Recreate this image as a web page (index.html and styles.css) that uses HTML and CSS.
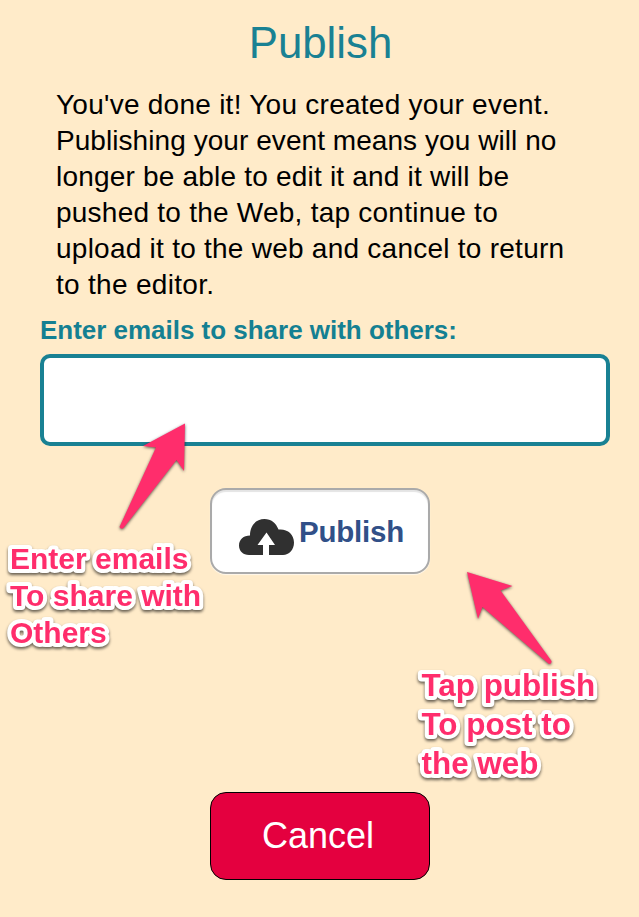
FILE: index.html
```html
<!DOCTYPE html>
<html lang="en">
<head>
<meta charset="utf-8">
<title>Publish</title>
<link rel="stylesheet" href="styles.css">
</head>
<body>
<main class="screen">
  <h1 class="title">Publish</h1>
  <p class="message">
    <span class="line-1">You've done it! You created your event.</span><br>
    <span class="line-2">Publishing your event means you will no</span><br>
    <span class="line-3">longer be able to edit it and it will be</span><br>
    <span class="line-4">pushed to the Web, tap continue to</span><br>
    <span class="line-5">upload it to the web and cancel to return</span><br>
    <span class="line-6">to the editor.</span>
  </p>
  <label class="label" for="emails"><span>Enter emails to share with others:</span></label>
  <input class="emails" id="emails" type="text">
  <button class="publish" type="button">
    <svg class="cloud" viewBox="0 0 56 38" width="56" height="38" aria-hidden="true">
      <path d="M11 37C5 37 1 33 1 27.500C1 21.500 5.500 17.500 12 17.500C12 7.500 18 1 26.500 1C33 1 38 5 40.500 11.500C49 10.500 56 16 56 24.500C56 32 51 37 45 37H31V27H37L28.500 14.500L19.500 27H25V37Z"/>
    </svg>
    <span>Publish</span>
  </button>
  <button class="cancel" type="button"><span>Cancel</span></button>

  <svg class="overlay" viewBox="0 0 639 917" width="639" height="917">
    <g class="arrows">
      <path d="M185 423.500L184 471L176.500 460L123.500 528Q121 530 119.500 527L156 447.500L143 446Z"/>
      <path d="M467 572L512.500 586L500.500 590.500L551.500 661Q552 664 549 664L482.500 607L478 619Z"/>
    </g>
    <g class="note note-emails">
      <text x="10" y="569">Enter emails</text>
      <text x="10" y="606">To share with</text>
      <text x="10" y="643">Others</text>
    </g>
    <g class="note note-publish">
      <text x="421.500" y="696">Tap publish</text>
      <text x="421.500" y="735">To post to</text>
      <text x="421.500" y="774">the web</text>
    </g>
  </svg>
</main>
</body>
</html>
```

FILE: styles.css
```css
* { box-sizing: border-box; }
body {
  margin: 0;
  background: #ffebc9;
  font-family: "Liberation Sans", Arial, sans-serif;
}
.screen {
  position: relative;
  display: flex;
  flex-direction: column;
  height: 917px;
  padding: 18px 29px 0 40px;
  overflow: hidden;
}
.title {
  margin: 0 9px 0 0;
  color: #198193;
  font-size: 43.8px;
  font-weight: 400;
  line-height: 50px;
  text-align: center;
}
.message {
  margin: 19px 0 0 16px;
  font-size: 28px;
  line-height: 36px;
  color: #000;
  white-space: nowrap;
}
.line-1 { letter-spacing: .26px; }
.line-2 { letter-spacing: .06px; }
.line-3 { letter-spacing: .2px; }
.line-4 { letter-spacing: .24px; }
.line-5 { letter-spacing: .25px; }
.line-6 { letter-spacing: .3px; }
.label {
  margin-top: 12px;
  height: 30px;
  color: #148092;
  font-size: 26px;
  font-weight: 700;
  line-height: 30px;
  letter-spacing: -.02px;
  white-space: nowrap;
}
.emails {
  width: 570px;
  height: 92px;
  margin-top: 9px;
  border: 4px solid #198193;
  border-radius: 10px;
  background: #fff;
  outline: 0;
}
.publish {
  display: flex;
  align-items: flex-start;
  width: 220px;
  height: 86px;
  margin: 42px 0 0 170px;
  padding: 0 0 0 26px;
  border: 2px solid #aaa;
  border-radius: 16px;
  background: #fff;
  box-shadow: inset 0 2px 1px #e4e4e4, 0 1px 1px #fff8eb;
  color: #315088;
  font: 700 29.5px/34px "Liberation Sans", Arial, sans-serif;
  letter-spacing: -.2px;
}
.publish span { margin: 25px 0 0 5px; }
.cloud { flex: none; margin-top: 28px; fill: #303030; }
.cancel {
  width: 220px;
  height: 88px;
  margin: 218px 0 0 170px;
  padding: 0 4px 0 0;
  border: 1px solid #000;
  border-radius: 16px;
  background: #e4003f;
  color: #fff;
  font: 400 36px/40px "Liberation Sans", Arial, sans-serif;
}
.overlay {
  position: absolute;
  inset: 0;
  pointer-events: none;
}
.arrows {
  fill: #ff2d6c;
  filter: drop-shadow(0 1px 1.500px rgba(0, 0, 0, .65));
}
.note {
  fill: #ff2d6c;
  stroke: #fff;
  stroke-width: 8px;
  stroke-linejoin: round;
  paint-order: stroke fill;
  font-weight: 700;
  filter: drop-shadow(0 2px 1.500px rgba(0, 0, 0, .6));
}
.note-emails { font-size: 30px; }
.note-publish { font-size: 31.4px; }
```
